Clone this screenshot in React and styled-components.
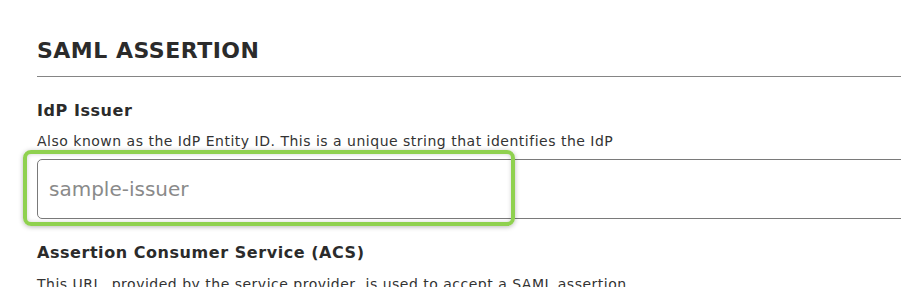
import React from "react";
import styled, { createGlobalStyle } from "styled-components";

const Global = createGlobalStyle`
  html, body { margin: 0; padding: 0; background: #ffffff; overflow: hidden; }
  body { font-family: "DejaVu Sans", "Noto Sans", sans-serif; color: #2b2b2b; }
  * { box-sizing: border-box; }
`;

const Page = styled.div`
  width: 901px;
  height: 287px;
  padding: 37px 0 0 37px;
  overflow: hidden;
`;

const Heading = styled.h2`
  margin: 0;
  font-size: 22px;
  line-height: 28px;
  font-weight: 700;
  color: #2b2b2b;
  letter-spacing: 0.5px;
`;

const Divider = styled.div`
  height: 1px;
  background: #858585;
  margin: 11px 0 0 0;
  width: calc(100% + 40px);
`;

const Field = styled.div`
  display: flex;
  flex-direction: column;
  margin-top: ${(p) => p.$top}px;
`;

const Label = styled.div`
  font-size: 16px;
  line-height: 20px;
  font-weight: 700;
  color: #2b2b2b;
  letter-spacing: 0.55px;
`;

const Hint = styled.div`
  font-size: 14px;
  line-height: 18px;
  color: #333;
  letter-spacing: 0.5px;
  margin-top: ${(p) => p.$gap}px;
  white-space: nowrap;
`;

const InputWrap = styled.div`
  position: relative;
  margin-top: 9px;
  width: calc(100% + 40px);
`;

const Input = styled.input`
  display: block;
  width: 100%;
  height: 60px;
  border: 1px solid #7a7a7a;
  border-radius: 5px;
  padding: 0 0 0 11px;
  font-family: inherit;
  font-size: 20px;
  color: #2b2b2b;
  background: #fff;
  outline: none;
  &::placeholder { color: #8a8a8a; }
`;

const Highlight = styled.div`
  position: absolute;
  left: -14px;
  top: -9px;
  width: 492px;
  height: 76px;
  border: 4px solid #8fd14f;
  border-radius: 8px;
  box-shadow: 0 1px 5px rgba(0, 0, 0, 0.28), inset 0 0 4px rgba(0, 0, 0, 0.18);
  pointer-events: none;
`;

export default function App() {
  return (
    <>
      <Global />
      <Page>
        <Heading>SAML ASSERTION</Heading>
        <Divider />
        <Field $top={24}>
          <Label>IdP Issuer</Label>
          <Hint $gap={11}>Also known as the IdP Entity ID. This is a unique string that identifies the IdP</Hint>
          <InputWrap>
            <Input placeholder="sample-issuer" readOnly />
            <Highlight />
          </InputWrap>
        </Field>
        <Field $top={24}>
          <Label>Assertion Consumer Service (ACS)</Label>
          <Hint $gap={12}>This URL, provided by the service provider, is used to accept a SAML assertion</Hint>
        </Field>
      </Page>
    </>
  );
}
